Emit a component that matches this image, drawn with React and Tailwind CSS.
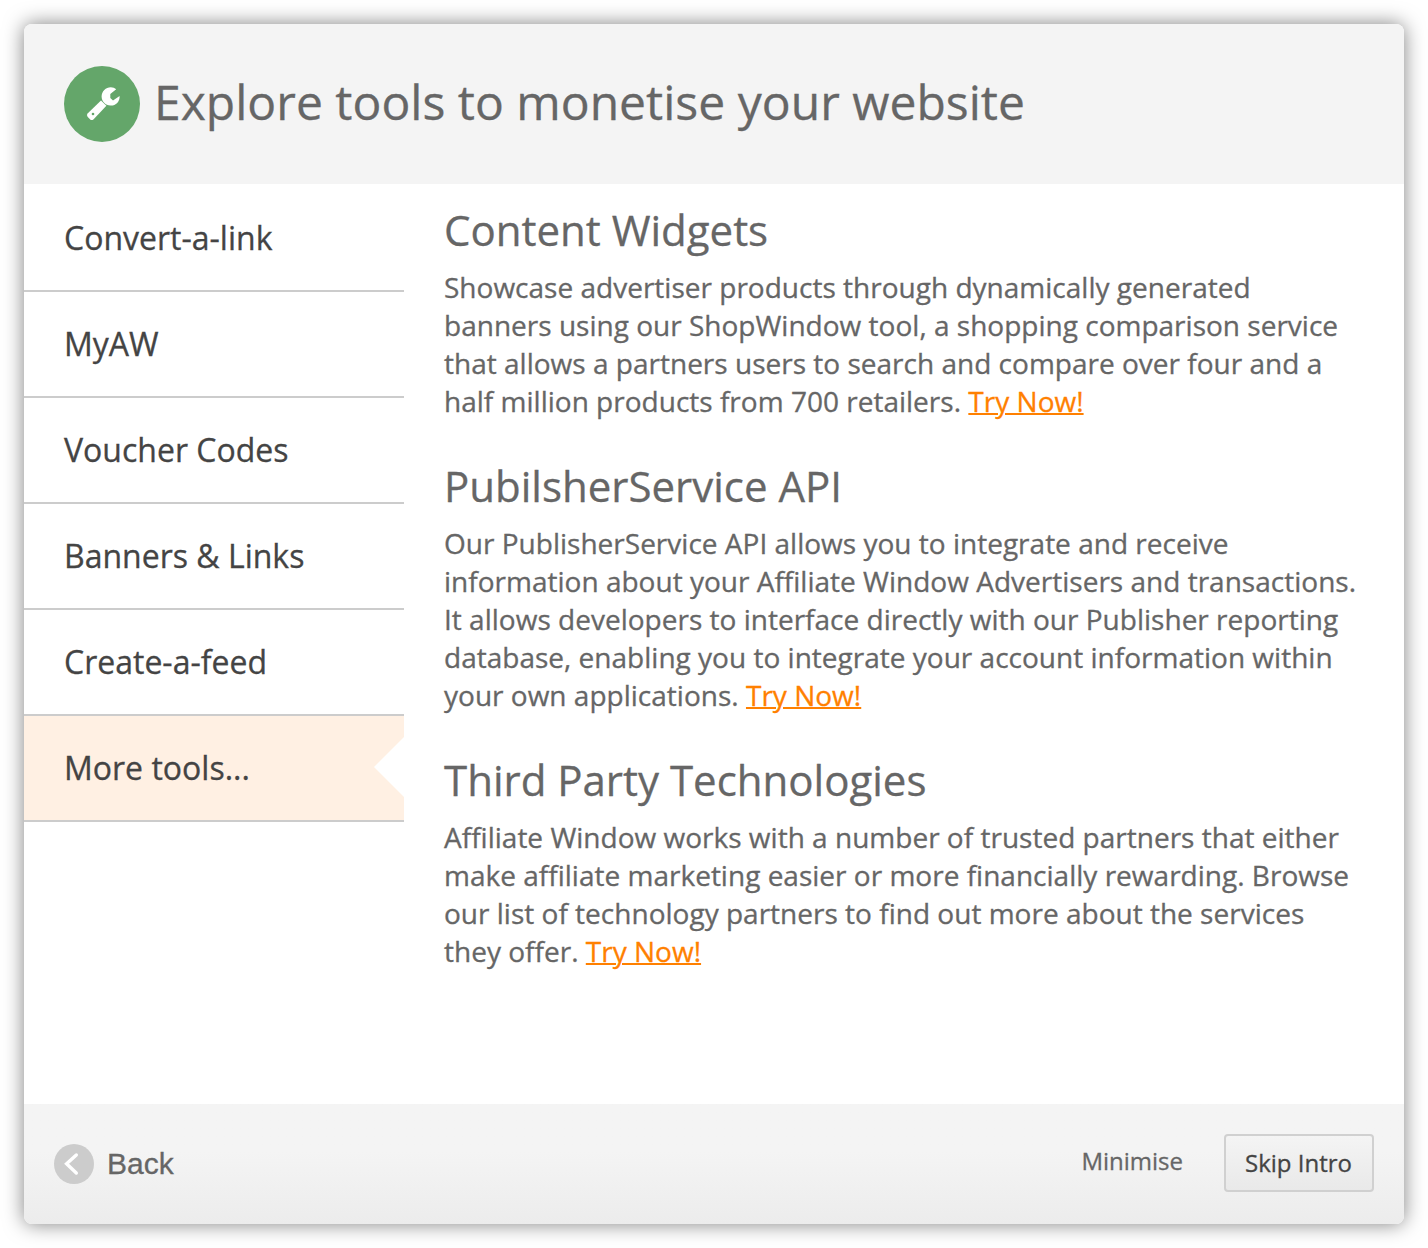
const tabs = ["Convert-a-link", "MyAW", "Voucher Codes", "Banners & Links", "Create-a-feed", "More tools..."];

const sections = [
  {
    title: "Content Widgets",
    gap: "mb-[38px]",
    lines: [
      "Showcase advertiser products through dynamically generated",
      "banners using our ShopWindow tool, a shopping comparison service",
      "that allows a partners users to search and compare over four and a",
      "half million products from 700 retailers.",
    ],
  },
  {
    title: "PubilsherService API",
    gap: "mb-[38px]",
    lines: [
      "Our PublisherService API allows you to integrate and receive",
      "information about your Affiliate Window Advertisers and transactions.",
      "It allows developers to interface directly with our Publisher reporting",
      "database, enabling you to integrate your account information within",
      "your own applications.",
    ],
  },
  {
    title: "Third Party Technologies",
    gap: "",
    lines: [
      "Affiliate Window works with a number of trusted partners that either",
      "make affiliate marketing easier or more financially rewarding. Browse",
      "our list of technology partners to find out more about the services",
      "they offer.",
    ],
  },
];

function Section({ title, lines, gap }) {
  return (
    <section className={gap}>
      <h2 className="text-[42px] leading-[58px] text-[#666]">{title}</h2>
      <p className="mt-[9px] -mb-px text-[28px] leading-[38px] tracking-[0.01px] whitespace-nowrap text-[#666]">
        {lines.map((line, i) => (
          <span key={line} className="block">
            {line}
            {i === lines.length - 1 && (
              <>
                {" "}
                <a href="#" className="text-[#ff8000] underline decoration-2">Try Now!</a>
              </>
            )}
          </span>
        ))}
      </p>
    </section>
  );
}

export default function App() {
  return (
    <div className="h-[1248px] w-[1428px] bg-white p-6 font-['Open_Sans',sans-serif] [-webkit-text-stroke:0.3px_currentColor]">
      <div className="flex h-[1200px] w-[1380px] flex-col overflow-hidden rounded-lg bg-white shadow-[0_0_20px_rgba(0,0,0,0.5)]">
        <header className="flex h-[160px] items-center bg-[#f4f4f4] pl-10">
          <svg className="size-[76px]" viewBox="0 0 76 76">
            <circle cx="38" cy="38" r="38" fill="#64a66a" />
            <path d="M37 34.4 L42.4 39.8 L29.4 53.4 Q27.8 54.8 26.2 53.4 L23.6 50.8 Q22.2 49.2 23.6 47.6Z" fill="#fff" />
            <path d="M52.2 23.2 L46.3 28 V32 L49 34.4 L55.6 30 C56 35.7 51.7 39.8 46.5 39.6 C41.5 39.4 37.6 35.5 37.6 30.5 C37.6 25.3 41.8 21.2 46.8 21.2 C48.8 21.2 50.8 22 52.2 23.2Z" fill="#fff" />
            <circle cx="29" cy="48" r="1.3" fill="#64a66a" />
          </svg>
          <h1 className="-mt-1 ml-[14px] text-[48px] leading-[64px] tracking-[0.02px] whitespace-nowrap text-[#666]">Explore tools to monetise your website</h1>
        </header>
        <main className="flex h-[920px]">
          <nav className="w-[380px]">
            {tabs.map((tab, i) => (
              <div
                key={tab}
                className={
                  i === 5
                    ? "flex h-[106px] items-center justify-between border-b-2 border-[#ccc] bg-[#fff0e3] pl-10"
                    : i === 0
                    ? "flex h-[108px] items-center border-b-2 border-[#ccc] pt-0.5 pl-10"
                    : "flex h-[106px] items-center border-b-2 border-[#ccc] pl-10"
                }
              >
                <span className="text-[32px] leading-[44px] text-[#444]">{tab}</span>
                {i === 5 && (
                  <svg className="-mt-0.5 h-[60px] w-[30px]" viewBox="0 0 30 60">
                    <path d="M30 0 L0 30 L30 60Z" fill="#fff" />
                  </svg>
                )}
              </div>
            ))}
          </nav>
          <div className="pt-[17px] pl-10">
            {sections.map((s) => <Section key={s.title} {...s} />)}
          </div>
        </main>
        <footer className="flex h-[120px] items-center bg-linear-to-b from-[#f4f4f4] from-40% to-[#ececec] pr-[30px] pl-[30px]">
          <svg className="size-10" viewBox="0 0 40 40">
            <circle cx="20" cy="20" r="20" fill="#ccc" />
            <path d="M22.3 11 L12.6 19.8 L22.3 29" fill="none" stroke="#fff" strokeWidth="3.4" strokeLinecap="round" />
          </svg>
          <span className="-mt-0.5 ml-[13px] font-['Liberation_Sans',sans-serif] text-[30px] text-[#666]">Back</span>
          <span className="-mt-[6px] mr-[41px] ml-auto text-[24px] text-[#666]">Minimise</span>
          <button className="-mt-0.5 h-[58px] w-[150px] rounded border-2 border-[#d0d0d0] bg-linear-to-b from-[#f4f4f4] to-[#e9e9e9] pr-px text-[24px] text-[#444]">Skip Intro</button>
        </footer>
      </div>
    </div>
  );
}
